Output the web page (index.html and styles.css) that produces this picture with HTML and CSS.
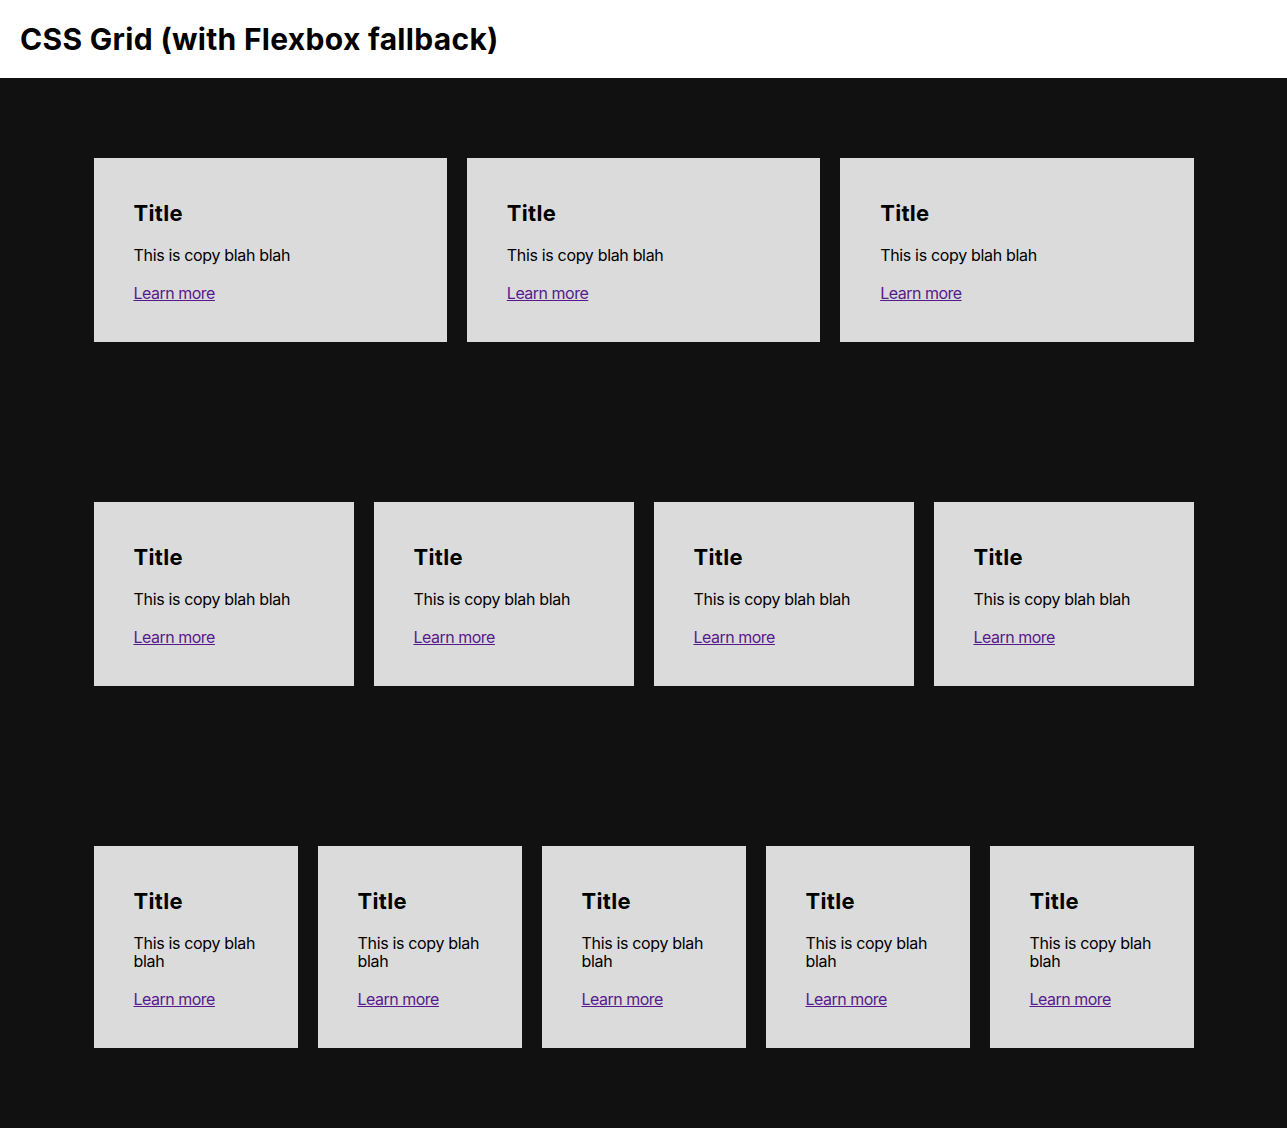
FILE: index.html
```html
<!DOCTYPE html>
<html lang="en">
<head>
<meta charset="utf-8">
<title>CSS Grid (with Flexbox fallback)</title>
<link rel="stylesheet" href="styles.css">
</head>
<body>
<header class="site-header">
  <h1 class="site-title">CSS Grid (with Flexbox fallback)</h1>
</header>
<main class="page">
  <section class="section">
    <div class="grid grid-3">
      <article class="card"><h2 class="card-title">Title</h2><p class="card-copy">This is copy blah blah</p><p class="card-more"><a class="card-link" href="#">Learn more</a></p></article>
      <article class="card"><h2 class="card-title">Title</h2><p class="card-copy">This is copy blah blah</p><p class="card-more"><a class="card-link" href="#">Learn more</a></p></article>
      <article class="card"><h2 class="card-title">Title</h2><p class="card-copy">This is copy blah blah</p><p class="card-more"><a class="card-link" href="#">Learn more</a></p></article>
    </div>
  </section>
  <section class="section">
    <div class="grid grid-4">
      <article class="card"><h2 class="card-title">Title</h2><p class="card-copy">This is copy blah blah</p><p class="card-more"><a class="card-link" href="#">Learn more</a></p></article>
      <article class="card"><h2 class="card-title">Title</h2><p class="card-copy">This is copy blah blah</p><p class="card-more"><a class="card-link" href="#">Learn more</a></p></article>
      <article class="card"><h2 class="card-title">Title</h2><p class="card-copy">This is copy blah blah</p><p class="card-more"><a class="card-link" href="#">Learn more</a></p></article>
      <article class="card"><h2 class="card-title">Title</h2><p class="card-copy">This is copy blah blah</p><p class="card-more"><a class="card-link" href="#">Learn more</a></p></article>
    </div>
  </section>
  <section class="section">
    <div class="grid grid-5">
      <article class="card"><h2 class="card-title">Title</h2><p class="card-copy">This is copy blah blah</p><p class="card-more"><a class="card-link" href="#">Learn more</a></p></article>
      <article class="card"><h2 class="card-title">Title</h2><p class="card-copy">This is copy blah blah</p><p class="card-more"><a class="card-link" href="#">Learn more</a></p></article>
      <article class="card"><h2 class="card-title">Title</h2><p class="card-copy">This is copy blah blah</p><p class="card-more"><a class="card-link" href="#">Learn more</a></p></article>
      <article class="card"><h2 class="card-title">Title</h2><p class="card-copy">This is copy blah blah</p><p class="card-more"><a class="card-link" href="#">Learn more</a></p></article>
      <article class="card"><h2 class="card-title">Title</h2><p class="card-copy">This is copy blah blah</p><p class="card-more"><a class="card-link" href="#">Learn more</a></p></article>
    </div>
  </section>
</main>
</body>
</html>
```
FILE: styles.css
```css
* { box-sizing: border-box; }
html, body { margin: 0; padding: 0; }
body {
  font-family: Inter, "Noto Sans", sans-serif;
  background: #111111;
  color: #000;
  min-height: 1128px;
}
.site-header {
  background: #fff;
  height: 78px;
  padding: 21px 20px 0;
}
.site-title {
  margin: 0;
  font-size: 30px;
  font-weight: 700;
  line-height: 36px;
  letter-spacing: 0.3px;
}
.section { padding: 80px 0; }
.grid {
  max-width: 1100px;
  margin: 0 auto;
  display: grid;
  gap: 20px;
}
.grid-3 { grid-template-columns: repeat(3, 1fr); }
.grid-4 { grid-template-columns: repeat(4, 1fr); }
.grid-5 { grid-template-columns: repeat(5, 1fr); }
.card {
  background: #dbdbdb;
  padding: 40px;
}
.card-title {
  margin: 0 0 19px;
  font-size: 22px;
  font-weight: 700;
  line-height: 30px;
  letter-spacing: 0.3px;
}
.card-copy {
  margin: 0 0 20px;
  font-size: 16px;
  line-height: 1.1;
  letter-spacing: -0.33px;
}
.card-more {
  margin: 0;
  font-size: 16px;
  line-height: 1.1;
}
.card-link {
  color: #551a8b;
  letter-spacing: -0.5px;
}
```
